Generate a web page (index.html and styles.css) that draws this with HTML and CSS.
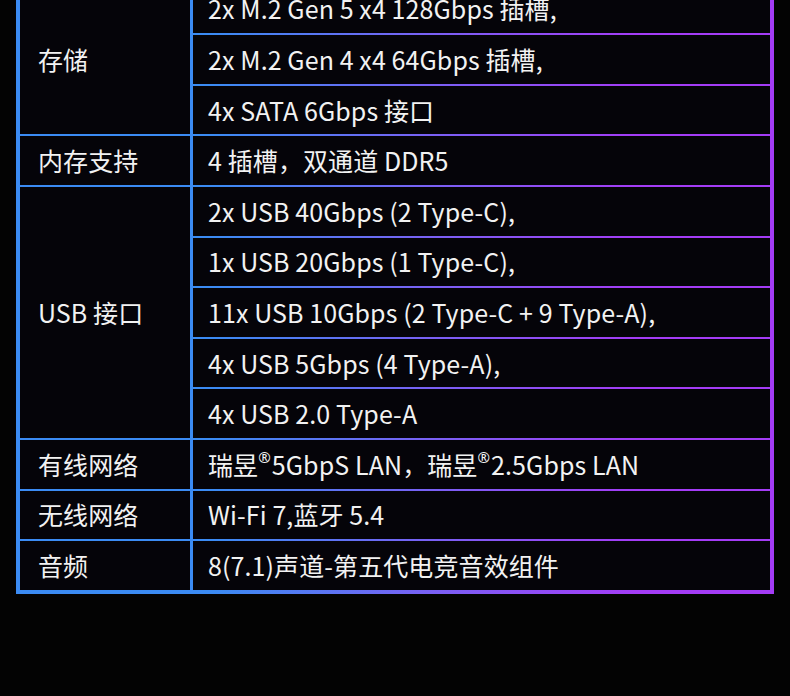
FILE: index.html
```html
<!DOCTYPE html>
<html lang="zh-CN">
<head>
<meta charset="utf-8">
<title>规格</title>
<link rel="stylesheet" href="styles.css">
</head>
<body>
<div class="spec">
  <div class="label span3">存储</div>
  <div class="value">2x M.2 Gen 5 x4 128Gbps 插槽,</div>
  <div class="value">2x M.2 Gen 4 x4 64Gbps 插槽,</div>
  <div class="value">4x SATA 6Gbps 接口</div>

  <div class="label">内存支持</div>
  <div class="value">4 插槽，双通道 DDR5</div>

  <div class="label span5">USB 接口</div>
  <div class="value">2x USB 40Gbps (2 Type-C),</div>
  <div class="value">1x USB 20Gbps (1 Type-C),</div>
  <div class="value">11x USB 10Gbps (2 Type-C + 9 Type-A),</div>
  <div class="value">4x USB 5Gbps (4 Type-A),</div>
  <div class="value">4x USB 2.0 Type-A</div>

  <div class="label">有线网络</div>
  <div class="value">瑞昱<span class="reg">®</span>5GbpS LAN，瑞昱<span class="reg">®</span>2.5Gbps LAN</div>

  <div class="label">无线网络</div>
  <div class="value">Wi-Fi 7,蓝牙 5.4</div>

  <div class="label">音频</div>
  <div class="value">8(7.1)声道-第五代电竞音效组件</div>
</div>
</body>
</html>
```

FILE: styles.css
```css
html, body {
  margin: 0;
  padding: 0;
  background: #030303;
}

body {
  width: 790px;
  height: 696px;
  overflow: hidden;
  font-family: "Noto Sans CJK SC", "Noto Sans", sans-serif;
  color: #f2f2f2;
}

.spec {
  margin: -15.4px 16px 0 16px;
  padding: 0 4px 4px 4px;
  display: grid;
  grid-template-columns: 170px 1fr;
  grid-auto-rows: 48.6px;
  column-gap: 3px;
  row-gap: 2px;
  background: linear-gradient(90deg, #3b8bf3 0%, #3b8bf3 26%, #7a60f4 55%, #a43cf6 82%, #a43cf6 100%);
}

.label, .value {
  background: #050409;
  display: flex;
  align-items: center;
  font-size: 25px;
  line-height: 1;
  letter-spacing: 0.1px;
  white-space: pre;
}

.label {
  grid-column: 1;
  padding-left: 18px;
}

.value {
  grid-column: 2;
  padding-left: 15px;
}

.span3 { grid-row: span 3; }
.span5 { grid-row: span 5; }

.reg {
  font-family: "Noto Sans", sans-serif;
  font-size: 15px;
  position: relative;
  top: -7px;
  margin-right: 1px;
}
```
